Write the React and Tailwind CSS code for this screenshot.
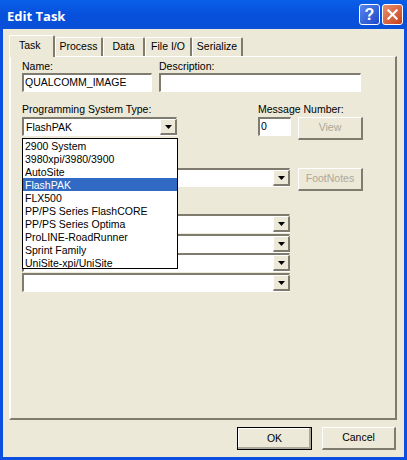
import { X } from 'lucide-react';

const SYSTEM_TYPES = [
  '2900 System',
  '3980xpi/3980/3900',
  'AutoSite',
  'FlashPAK',
  'FLX500',
  'PP/PS Series FlashCORE',
  'PP/PS Series Optima',
  'ProLINE-RoadRunner',
  'Sprint Family',
  'UniSite-xpi/UniSite',
];

const TABS = [
  { label: 'Process', width: 'w-[48px]' },
  { label: 'Data', width: 'w-[42px]' },
  { label: 'File I/O', width: 'w-[47px]' },
  { label: 'Serialize', width: 'w-[51px]' },
];

const inset = 'border-t-2 border-l-2 border-r border-b border-t-[#7f7c6f] border-l-[#7f7c6f] border-r-white border-b-white bg-white';

function Arrow() {
  return (
    <svg width="7" height="4" viewBox="0 0 7 4">
      <path d="M0 0h7L3.5 4z" fill="#000" />
    </svg>
  );
}

// combo box with the little raised arrow button on the right
function Combo({ value, className = '' }) {
  return (
    <div className={`${inset} h-[19px] flex items-center justify-between ${className}`}>
      <span className="pl-[2px] leading-none">{value}</span>
      <div className="w-[17px] h-[16px] mr-[-1px] flex items-center justify-center bg-[#ece9d8] border-t border-l border-t-white border-l-white border-r-2 border-b-2 border-r-[#7f7c6f] border-b-[#7f7c6f]">
        <Arrow />
      </div>
    </div>
  );
}

function DisabledButton({ children, className = '' }) {
  return (
    <div className={`w-[65px] h-[23px] flex items-center justify-center text-[#aca899] border-t border-l border-t-white border-l-white border-r-2 border-b-2 border-r-[#7f7c6f] border-b-[#7f7c6f] ${className}`}>
      {children}
    </div>
  );
}

export default function App() {
  return (
    <div className="w-[407px] h-[460px] flex flex-col overflow-hidden bg-[#0a4fe0] text-[10.5px] text-black whitespace-nowrap font-['Liberation_Sans',Arial,sans-serif]">
      {/* title bar */}
      <div className="h-[29px] shrink-0 flex items-center justify-between pl-[7px] pr-[4px] bg-gradient-to-b from-[#0a5fe8] via-[#0650dc] to-[#0a50d8]">
        <span className="text-white font-bold text-[13px] mt-[4px] font-['Open_Sans',sans-serif]">Edit Task</span>
        <div className="flex gap-[2px]">
          <div className="w-[21px] h-[21px] rounded-[3px] border border-white bg-gradient-to-br from-[#5a86ec] to-[#1e46c8] flex items-center justify-center text-white font-bold text-[16px] leading-none">?</div>
          <div className="w-[21px] h-[21px] rounded-[3px] border border-white bg-gradient-to-br from-[#e8906c] to-[#c83c14] flex items-center justify-center text-white">
            <X size={17} strokeWidth={3} />
          </div>
        </div>
      </div>

      {/* dialog body */}
      <div className="flex-1 mx-[3px] mb-[3px] bg-[#ece9d8] flex flex-col pl-[6px] pr-[7px] pt-[7px]">
        <div className="flex items-end h-[20px] relative z-10">
          <div className="w-[46px] h-[22px] mb-[-1px] pl-[9px] pt-[2px] bg-[#ece9d8] border-t border-l border-t-white border-l-white border-r-2 border-r-[#7f7c6f] rounded-t-[2px]">Task</div>
          {TABS.map((tab) => (
            <div key={tab.label} className={`${tab.width} h-[19px] flex items-center justify-center border-t border-l border-t-white border-l-white border-r-2 border-r-[#7f7c6f] rounded-t-[2px]`}>
              {tab.label}
            </div>
          ))}
        </div>

        {/* tab page */}
        <div className="h-[364px] border-t border-l-2 border-t-white border-l-white border-r-2 border-b-2 border-r-[#7f7c6f] border-b-[#7f7c6f] pl-[11px] pt-[2px]">
          <div className="flex gap-[7px]">
            <div className="w-[130px]">
              <div className="h-[14px] leading-[14px]">Name:</div>
              <div className={`${inset} h-[19px] pl-[1px] leading-[15px]`}>QUALCOMM_IMAGE</div>
            </div>
            <div className="w-[202px]">
              <div className="h-[14px] leading-[14px]">Description:</div>
              <div className={`${inset} h-[19px]`} />
            </div>
          </div>

          <div className="flex mt-[11px]">
            <div className="w-[155px] relative">
              <div className="h-[14px] leading-[13px]">Programming System Type:</div>
              <Combo value="FlashPAK" />
              <div className="absolute z-20 left-0 top-[35px] w-[156px] h-[131px] bg-white border border-black">
                {SYSTEM_TYPES.map((type) => (
                  <div
                    key={type}
                    className={`h-[13px] pl-[2px] leading-[14px] ${type === 'FlashPAK' ? 'bg-[#316ac5] text-white' : ''}`}
                  >
                    {type}
                  </div>
                ))}
              </div>
            </div>
            <div className="ml-[81px] w-[33px]">
              <div className="h-[14px] leading-[13px]">Message Number:</div>
              <div className={`${inset} h-[19px] pl-[1px] leading-[15px]`}>0</div>
            </div>
            <DisabledButton className="ml-[7px] mt-[14px]">View</DisabledButton>
          </div>

          <div className="flex mt-[28px]">
            <Combo className="w-[268px]" />
            <DisabledButton className="ml-[8px]">FootNotes</DisabledButton>
          </div>

          <div className="w-[268px] flex flex-col mt-[23px]">
            <Combo />
            <Combo className="mt-[1px]" />
            <Combo />
            <Combo className="mt-[1px]" />
          </div>
        </div>

        {/* OK / Cancel */}
        <div className="flex justify-end gap-[10px] mt-[7px] pr-[1px]">
          <div className="w-[75px] h-[23px] flex items-center justify-center border border-black shadow-[inset_-2px_-2px_0_#aca899,inset_1px_1px_0_#fff]">OK</div>
          <div className="w-[74px] h-[23px] flex items-center justify-center border-t border-l border-t-white border-l-white border-r-2 border-b-2 border-r-[#7f7c6f] border-b-[#7f7c6f]">Cancel</div>
        </div>
      </div>
    </div>
  );
}
